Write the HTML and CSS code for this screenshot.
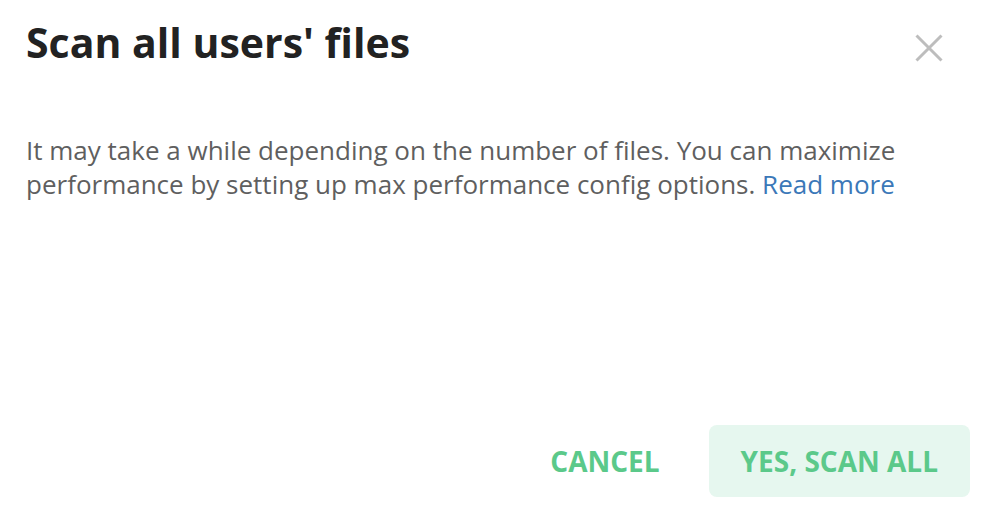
FILE: index.html
```html
<!DOCTYPE html>
<html lang="en">
<head>
<meta charset="utf-8">
<title>Scan all users' files</title>
<link rel="stylesheet" href="styles.css">
</head>
<body>
<div class="dialog">
  <div class="dialog-header">
    <h1 class="dialog-title">Scan all users' files</h1>
    <button class="close-btn" aria-label="Close">
      <svg width="28" height="28" viewBox="0 0 28 28"><path d="M1.5 1.5 L26.5 26.5 M26.5 1.5 L1.5 26.5" stroke="#bdbdbd" stroke-width="3" fill="none"/></svg>
    </button>
  </div>
  <p class="dialog-text">It may take a while depending on the number of files. You can maximize performance by setting up max performance config options. <a href="#" class="link">Read more</a></p>
  <div class="dialog-footer">
    <button class="btn btn-text">CANCEL</button>
    <button class="btn btn-primary">YES, SCAN ALL</button>
  </div>
</div>
</body>
</html>
```
FILE: styles.css
```css
html, body {
  margin: 0;
  padding: 0;
  background: #fff;
}
body {
  font-family: "Open Sans", "Noto Sans", sans-serif;
}
.dialog {
  box-sizing: border-box;
  height: 514px;
  display: flex;
  flex-direction: column;
  padding: 14px 18px 17px 26px;
}
.dialog-header {
  display: flex;
  justify-content: space-between;
  align-items: flex-start;
}
.dialog-title {
  margin: 0;
  font-size: 41px;
  line-height: 56px;
  font-weight: 700;
  color: #222222;
}
.close-btn {
  margin: 14px 21px 0 0;
  width: 40px;
  height: 40px;
  padding: 0;
  border: none;
  background: transparent;
  display: flex;
  align-items: center;
  justify-content: center;
  cursor: pointer;
}
.dialog-text {
  margin: 63px 0 0 0;
  font-size: 26px;
  line-height: 34px;
  color: #5f5f5f;
  max-width: 900px;
}
.link {
  display: inline-block;
  color: #3b78b8;
  text-decoration: none;
}
.dialog-footer {
  margin-top: auto;
  display: flex;
  justify-content: flex-end;
  gap: 17px;
}
.btn {
  font-family: "Open Sans", "Noto Sans", sans-serif;
  font-weight: 700;
  font-size: 28px;
  height: 72px;
  padding: 0 32px;
  border: none;
  border-radius: 8px;
  color: #5bc98a;
  background: transparent;
  cursor: pointer;
}
.btn-primary {
  background: #e6f7ef;
}
```
